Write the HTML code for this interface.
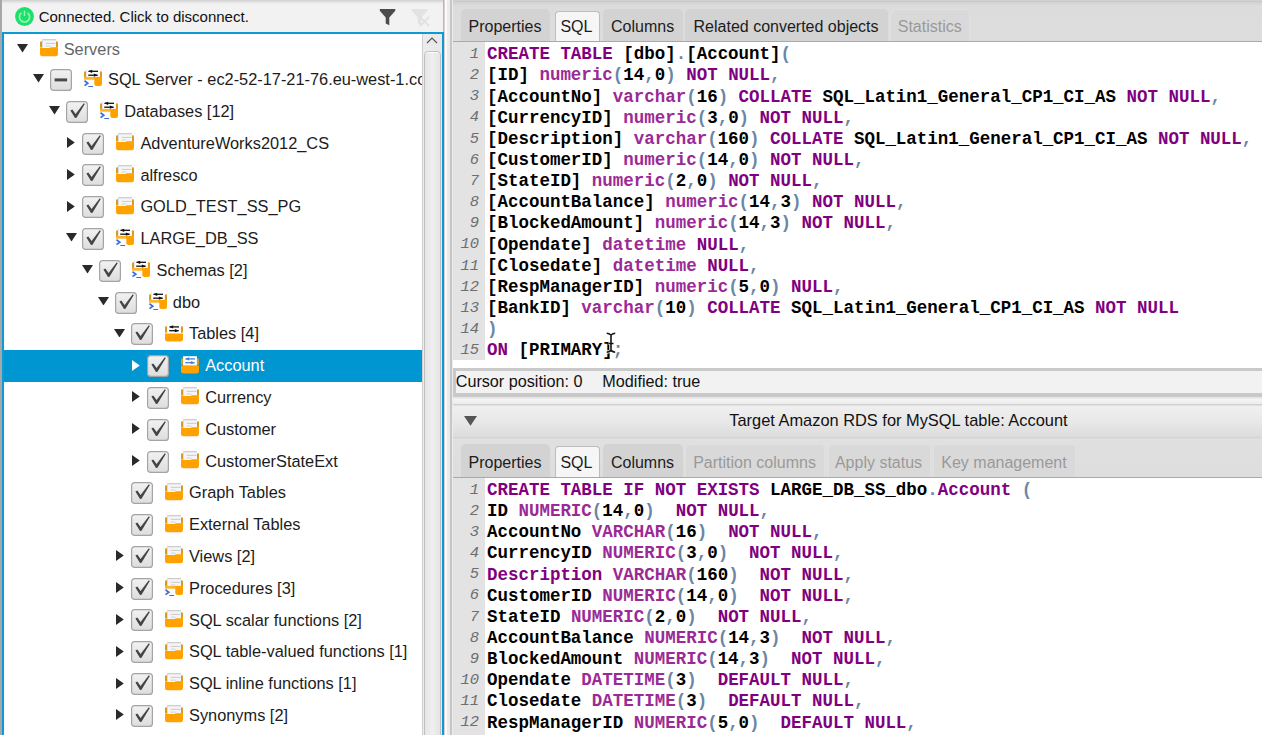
<!DOCTYPE html>
<html><head><meta charset="utf-8"><style>
html,body{margin:0;padding:0;}
body{width:1262px;height:735px;overflow:hidden;position:relative;background:#e6e6e6;font-family:"Liberation Sans",sans-serif;}
.abs{position:absolute;}
.tt{position:absolute;font-size:16.35px;line-height:31.71px;height:31.71px;white-space:nowrap;}
.tab{position:absolute;background:#d3d3d3;border-radius:5px 5px 0 0;}
.tab.sel{background:#f6f6f6;border:1px solid #bdbdbd;border-bottom:none;box-sizing:border-box;border-radius:4px 4px 0 0;}
.tab.dis{background:#d9d9d9;box-shadow:inset 1px 1px 0 #e0e0e0,inset -1px 0 0 #e0e0e0;}
.tl{position:absolute;top:0;font-size:16px;line-height:41px;white-space:nowrap;}
.code{position:absolute;left:487px;font:bold 17.48px/21.15px "Liberation Mono",monospace;white-space:pre;color:#000;}
.gut{position:absolute;left:453px;width:32px;background:#e3e3e3;}
.gn{position:absolute;right:6px;text-align:right;font:italic 15.5px/21.15px "Liberation Mono",monospace;white-space:pre;color:#6e6e6e;}
</style></head><body>
<!-- LEFT PANE -->
<div class="abs" style="left:0;top:0;width:2px;height:735px;background:#a8a8a8"></div>
<div class="abs" style="left:2px;top:0;width:441px;height:32px;background:linear-gradient(#cfcfcf 0,#e4e4e4 2px,#f2f2f2 4px,#f2f2f2 100%)"></div>
<div class="abs" style="left:443px;top:0;width:1px;height:32px;background:#b8b8b8"></div>
<svg class="abs" style="left:15px;top:7px" width="19" height="19" viewBox="0 0 19 19">
<circle cx="9.5" cy="9.5" r="9.4" fill="#1ee068"/>
<path d="M6.4 5.9 A5.1 5.1 0 1 0 12.6 5.9" stroke="#9af2bc" stroke-width="1.6" fill="none"/>
<rect x="8.75" y="3.6" width="1.5" height="5.4" fill="#9af2bc"/>
</svg>
<div class="abs" style="left:38.7px;top:1.3px;font-size:15px;line-height:32px;color:#111;white-space:nowrap">Connected. Click to disconnect.</div>
<svg class="abs" style="left:379px;top:8px" width="18" height="18" viewBox="0 0 18 18">
<path d="M0.8 0.9 H16.3 V2.8 L10.3 9.5 V17.3 L6.7 15.4 V9.5 L0.8 2.8 Z" fill="#4c4c4c"/>
</svg>
<svg class="abs" style="left:411px;top:8px" width="19" height="19" viewBox="0 0 19 19">
<path d="M0.8 0.9 H16.3 V2.8 L10.3 9.5 V17.3 L6.7 15.4 V9.5 L0.8 2.8 Z" fill="#e2e2e2"/>
<path d="M9 9 L18 18 M18 9 L9 18" stroke="#dedede" stroke-width="1.6"/>
</svg>
<!-- tree box -->
<div class="abs" style="left:2px;top:32px;width:442px;height:703px;background:#0a9bd6"></div>
<div class="abs" style="left:4px;top:34px;width:438px;height:701px;background:#fff;overflow:hidden">
<div class="abs" style="left:-4px;top:-34px;width:422px;height:735px;overflow:hidden">
<svg style="position:absolute;left:17.00px;top:44.15px" width="11" height="8.5" viewBox="0 0 11 8.5"><path d="M0 0 H11 L5.5 8.5 Z" fill="#2a2a2a"/></svg>
<svg style="position:absolute;left:40.00px;top:39.15px" width="18" height="18" viewBox="0 0 18 18"><rect x="0" y="2.2" width="2.6" height="6.6" rx="1.2" fill="#dc9a1c"/><rect x="15.4" y="2.2" width="2.6" height="6.6" rx="1.2" fill="#dc9a1c"/><rect x="2" y="0.1" width="14" height="8.6" fill="#f5f5f7"/><rect x="2" y="0.1" width="14" height="1.2" fill="#cbcbcb"/><rect x="2" y="0.1" width="1" height="8.6" fill="#d9dde8"/><rect x="5.8" y="3.9" width="9.6" height="1.1" fill="#cfcfcf"/><rect x="5.8" y="6.6" width="4.5" height="1" fill="#cdd2dc"/><path d="M0 9.1 H9.8 L10.6 8.3 H18 V15 Q18 17.2 15.8 17.2 H2.2 Q0 17.2 0 15 Z" fill="#ffa200"/></svg>
<div class="tt" style="left:63.70px;top:33.85px;color:#666">Servers</div>
<svg style="position:absolute;left:33.20px;top:74.44px" width="11" height="8.5" viewBox="0 0 11 8.5"><path d="M0 0 H11 L5.5 8.5 Z" fill="#2a2a2a"/></svg>
<svg style="position:absolute;left:50.00px;top:69.04px" width="22" height="22" viewBox="0 0 22 22"><defs><linearGradient id="cg" x1="0" y1="0" x2="0" y2="1"><stop offset="0" stop-color="#f2f2f2"/><stop offset="1" stop-color="#dddddd"/></linearGradient></defs><rect x="0.6" y="0.6" width="20.8" height="20.8" rx="3" fill="url(#cg)" stroke="#a4a4a4" stroke-width="1.2"/><rect x="4.6" y="9.4" width="12.5" height="3" fill="#4a4a4a"/></svg>
<svg style="position:absolute;left:83.80px;top:69.44px" width="18" height="18" viewBox="0 0 18 18"><rect x="0" y="2.2" width="2.6" height="6.6" rx="1.2" fill="#dc9a1c"/><rect x="15.4" y="2.2" width="2.6" height="6.6" rx="1.2" fill="#dc9a1c"/><rect x="2.2" y="0" width="13.6" height="8.4" fill="#fff"/><rect x="2.2" y="0" width="0.9" height="8.4" fill="#e2e4ea"/><rect x="4.6" y="1.65" width="9.4" height="1.3" fill="#111"/><path d="M4.0 2.3 L8.2 0.6999999999999997 L8.2 3.9 Z" fill="#111"/><rect x="4.2" y="5.55" width="9.4" height="1.3" fill="#111"/><path d="M14.0 6.2 L9.8 4.6 L9.8 7.800000000000001 Z" fill="#111"/><rect x="0" y="7.9" width="18" height="2.8" fill="#ffb52a"/><path d="M10.3 7.9 H18 V15.1 Q18 17.1 16 17.1 H12.3 Q10.3 17.1 10.3 15.1 Z" fill="#ffa200"/><path d="M0.5 11.8 L3.8 14.2 L0.5 16.6" stroke="#3a6fd8" stroke-width="1.7" fill="none"/><rect x="4.3" y="17" width="4.8" height="1.4" fill="#3a6fd8"/></svg>
<div class="tt" style="left:108.00px;top:64.14px;color:#1c1c1c">SQL Server - ec2-52-17-21-76.eu-west-1.compute.amazonaws.com</div>
<svg style="position:absolute;left:49.40px;top:106.23px" width="11" height="8.5" viewBox="0 0 11 8.5"><path d="M0 0 H11 L5.5 8.5 Z" fill="#2a2a2a"/></svg>
<svg style="position:absolute;left:66.20px;top:100.83px" width="22" height="22" viewBox="0 0 22 22"><defs><linearGradient id="cg" x1="0" y1="0" x2="0" y2="1"><stop offset="0" stop-color="#f2f2f2"/><stop offset="1" stop-color="#dddddd"/></linearGradient></defs><rect x="0.6" y="0.6" width="20.8" height="20.8" rx="3" fill="url(#cg)" stroke="#a4a4a4" stroke-width="1.2"/><path d="M4.4 9.5 L6.3 8.4 L9.6 13.1 L17.8 2.3 L18.8 3.1 L10.5 16.7 L9.0 16.9 Z" fill="#454545"/></svg>
<svg style="position:absolute;left:100.00px;top:101.23px" width="18" height="18" viewBox="0 0 18 18"><rect x="0" y="2.2" width="2.6" height="6.6" rx="1.2" fill="#dc9a1c"/><rect x="15.4" y="2.2" width="2.6" height="6.6" rx="1.2" fill="#dc9a1c"/><rect x="2.2" y="0" width="13.6" height="8.4" fill="#fff"/><rect x="2.2" y="0" width="0.9" height="8.4" fill="#e2e4ea"/><rect x="4.6" y="1.65" width="9.4" height="1.3" fill="#111"/><path d="M4.0 2.3 L8.2 0.6999999999999997 L8.2 3.9 Z" fill="#111"/><rect x="4.2" y="5.55" width="9.4" height="1.3" fill="#111"/><path d="M14.0 6.2 L9.8 4.6 L9.8 7.800000000000001 Z" fill="#111"/><rect x="0" y="7.9" width="18" height="2.8" fill="#ffb52a"/><path d="M10.3 7.9 H18 V15.1 Q18 17.1 16 17.1 H12.3 Q10.3 17.1 10.3 15.1 Z" fill="#ffa200"/><path d="M0.5 11.8 L3.8 14.2 L0.5 16.6" stroke="#3a6fd8" stroke-width="1.7" fill="none"/><rect x="4.3" y="17" width="4.8" height="1.4" fill="#3a6fd8"/></svg>
<div class="tt" style="left:124.20px;top:95.93px;color:#1c1c1c">Databases [12]</div>
<svg style="position:absolute;left:67.00px;top:137.12px" width="8" height="11" viewBox="0 0 8 11"><path d="M0 0 L7.8 5.5 L0 11 Z" fill="#2a2a2a"/></svg>
<svg style="position:absolute;left:82.40px;top:132.62px" width="22" height="22" viewBox="0 0 22 22"><defs><linearGradient id="cg" x1="0" y1="0" x2="0" y2="1"><stop offset="0" stop-color="#f2f2f2"/><stop offset="1" stop-color="#dddddd"/></linearGradient></defs><rect x="0.6" y="0.6" width="20.8" height="20.8" rx="3" fill="url(#cg)" stroke="#a4a4a4" stroke-width="1.2"/><path d="M4.4 9.5 L6.3 8.4 L9.6 13.1 L17.8 2.3 L18.8 3.1 L10.5 16.7 L9.0 16.9 Z" fill="#454545"/></svg>
<svg style="position:absolute;left:116.20px;top:133.02px" width="18" height="18" viewBox="0 0 18 18"><rect x="0" y="2.2" width="2.6" height="6.6" rx="1.2" fill="#dc9a1c"/><rect x="15.4" y="2.2" width="2.6" height="6.6" rx="1.2" fill="#dc9a1c"/><rect x="2" y="0.1" width="14" height="8.6" fill="#f5f5f7"/><rect x="2" y="0.1" width="14" height="1.2" fill="#cbcbcb"/><rect x="2" y="0.1" width="1" height="8.6" fill="#d9dde8"/><rect x="5.8" y="3.9" width="9.6" height="1.1" fill="#cfcfcf"/><rect x="5.8" y="6.6" width="4.5" height="1" fill="#cdd2dc"/><path d="M0 9.1 H9.8 L10.6 8.3 H18 V15 Q18 17.2 15.8 17.2 H2.2 Q0 17.2 0 15 Z" fill="#ffa200"/></svg>
<div class="tt" style="left:140.40px;top:127.72px;color:#1c1c1c">AdventureWorks2012_CS</div>
<svg style="position:absolute;left:67.00px;top:168.91px" width="8" height="11" viewBox="0 0 8 11"><path d="M0 0 L7.8 5.5 L0 11 Z" fill="#2a2a2a"/></svg>
<svg style="position:absolute;left:82.40px;top:164.41px" width="22" height="22" viewBox="0 0 22 22"><defs><linearGradient id="cg" x1="0" y1="0" x2="0" y2="1"><stop offset="0" stop-color="#f2f2f2"/><stop offset="1" stop-color="#dddddd"/></linearGradient></defs><rect x="0.6" y="0.6" width="20.8" height="20.8" rx="3" fill="url(#cg)" stroke="#a4a4a4" stroke-width="1.2"/><path d="M4.4 9.5 L6.3 8.4 L9.6 13.1 L17.8 2.3 L18.8 3.1 L10.5 16.7 L9.0 16.9 Z" fill="#454545"/></svg>
<svg style="position:absolute;left:116.20px;top:164.81px" width="18" height="18" viewBox="0 0 18 18"><rect x="0" y="2.2" width="2.6" height="6.6" rx="1.2" fill="#dc9a1c"/><rect x="15.4" y="2.2" width="2.6" height="6.6" rx="1.2" fill="#dc9a1c"/><rect x="2" y="0.1" width="14" height="8.6" fill="#f5f5f7"/><rect x="2" y="0.1" width="14" height="1.2" fill="#cbcbcb"/><rect x="2" y="0.1" width="1" height="8.6" fill="#d9dde8"/><rect x="5.8" y="3.9" width="9.6" height="1.1" fill="#cfcfcf"/><rect x="5.8" y="6.6" width="4.5" height="1" fill="#cdd2dc"/><path d="M0 9.1 H9.8 L10.6 8.3 H18 V15 Q18 17.2 15.8 17.2 H2.2 Q0 17.2 0 15 Z" fill="#ffa200"/></svg>
<div class="tt" style="left:140.40px;top:159.51px;color:#1c1c1c">alfresco</div>
<svg style="position:absolute;left:67.00px;top:200.70px" width="8" height="11" viewBox="0 0 8 11"><path d="M0 0 L7.8 5.5 L0 11 Z" fill="#2a2a2a"/></svg>
<svg style="position:absolute;left:82.40px;top:196.20px" width="22" height="22" viewBox="0 0 22 22"><defs><linearGradient id="cg" x1="0" y1="0" x2="0" y2="1"><stop offset="0" stop-color="#f2f2f2"/><stop offset="1" stop-color="#dddddd"/></linearGradient></defs><rect x="0.6" y="0.6" width="20.8" height="20.8" rx="3" fill="url(#cg)" stroke="#a4a4a4" stroke-width="1.2"/><path d="M4.4 9.5 L6.3 8.4 L9.6 13.1 L17.8 2.3 L18.8 3.1 L10.5 16.7 L9.0 16.9 Z" fill="#454545"/></svg>
<svg style="position:absolute;left:116.20px;top:196.60px" width="18" height="18" viewBox="0 0 18 18"><rect x="0" y="2.2" width="2.6" height="6.6" rx="1.2" fill="#dc9a1c"/><rect x="15.4" y="2.2" width="2.6" height="6.6" rx="1.2" fill="#dc9a1c"/><rect x="2" y="0.1" width="14" height="8.6" fill="#f5f5f7"/><rect x="2" y="0.1" width="14" height="1.2" fill="#cbcbcb"/><rect x="2" y="0.1" width="1" height="8.6" fill="#d9dde8"/><rect x="5.8" y="3.9" width="9.6" height="1.1" fill="#cfcfcf"/><rect x="5.8" y="6.6" width="4.5" height="1" fill="#cdd2dc"/><path d="M0 9.1 H9.8 L10.6 8.3 H18 V15 Q18 17.2 15.8 17.2 H2.2 Q0 17.2 0 15 Z" fill="#ffa200"/></svg>
<div class="tt" style="left:140.40px;top:191.30px;color:#1c1c1c">GOLD_TEST_SS_PG</div>
<svg style="position:absolute;left:65.60px;top:233.39px" width="11" height="8.5" viewBox="0 0 11 8.5"><path d="M0 0 H11 L5.5 8.5 Z" fill="#2a2a2a"/></svg>
<svg style="position:absolute;left:82.40px;top:227.99px" width="22" height="22" viewBox="0 0 22 22"><defs><linearGradient id="cg" x1="0" y1="0" x2="0" y2="1"><stop offset="0" stop-color="#f2f2f2"/><stop offset="1" stop-color="#dddddd"/></linearGradient></defs><rect x="0.6" y="0.6" width="20.8" height="20.8" rx="3" fill="url(#cg)" stroke="#a4a4a4" stroke-width="1.2"/><path d="M4.4 9.5 L6.3 8.4 L9.6 13.1 L17.8 2.3 L18.8 3.1 L10.5 16.7 L9.0 16.9 Z" fill="#454545"/></svg>
<svg style="position:absolute;left:116.20px;top:228.39px" width="18" height="18" viewBox="0 0 18 18"><rect x="0" y="2.2" width="2.6" height="6.6" rx="1.2" fill="#dc9a1c"/><rect x="15.4" y="2.2" width="2.6" height="6.6" rx="1.2" fill="#dc9a1c"/><rect x="2.2" y="0" width="13.6" height="8.4" fill="#fff"/><rect x="2.2" y="0" width="0.9" height="8.4" fill="#e2e4ea"/><rect x="4.6" y="1.65" width="9.4" height="1.3" fill="#111"/><path d="M4.0 2.3 L8.2 0.6999999999999997 L8.2 3.9 Z" fill="#111"/><rect x="4.2" y="5.55" width="9.4" height="1.3" fill="#111"/><path d="M14.0 6.2 L9.8 4.6 L9.8 7.800000000000001 Z" fill="#111"/><rect x="0" y="7.9" width="18" height="2.8" fill="#ffb52a"/><path d="M10.3 7.9 H18 V15.1 Q18 17.1 16 17.1 H12.3 Q10.3 17.1 10.3 15.1 Z" fill="#ffa200"/><path d="M0.5 11.8 L3.8 14.2 L0.5 16.6" stroke="#3a6fd8" stroke-width="1.7" fill="none"/><rect x="4.3" y="17" width="4.8" height="1.4" fill="#3a6fd8"/></svg>
<div class="tt" style="left:140.40px;top:223.09px;color:#1c1c1c">LARGE_DB_SS</div>
<svg style="position:absolute;left:81.80px;top:265.18px" width="11" height="8.5" viewBox="0 0 11 8.5"><path d="M0 0 H11 L5.5 8.5 Z" fill="#2a2a2a"/></svg>
<svg style="position:absolute;left:98.60px;top:259.78px" width="22" height="22" viewBox="0 0 22 22"><defs><linearGradient id="cg" x1="0" y1="0" x2="0" y2="1"><stop offset="0" stop-color="#f2f2f2"/><stop offset="1" stop-color="#dddddd"/></linearGradient></defs><rect x="0.6" y="0.6" width="20.8" height="20.8" rx="3" fill="url(#cg)" stroke="#a4a4a4" stroke-width="1.2"/><path d="M4.4 9.5 L6.3 8.4 L9.6 13.1 L17.8 2.3 L18.8 3.1 L10.5 16.7 L9.0 16.9 Z" fill="#454545"/></svg>
<svg style="position:absolute;left:132.40px;top:260.18px" width="18" height="18" viewBox="0 0 18 18"><rect x="0" y="2.2" width="2.6" height="6.6" rx="1.2" fill="#dc9a1c"/><rect x="15.4" y="2.2" width="2.6" height="6.6" rx="1.2" fill="#dc9a1c"/><rect x="2.2" y="0" width="13.6" height="8.4" fill="#fff"/><rect x="2.2" y="0" width="0.9" height="8.4" fill="#e2e4ea"/><rect x="4.6" y="1.65" width="9.4" height="1.3" fill="#111"/><path d="M4.0 2.3 L8.2 0.6999999999999997 L8.2 3.9 Z" fill="#111"/><rect x="4.2" y="5.55" width="9.4" height="1.3" fill="#111"/><path d="M14.0 6.2 L9.8 4.6 L9.8 7.800000000000001 Z" fill="#111"/><rect x="0" y="7.9" width="18" height="2.8" fill="#ffb52a"/><path d="M10.3 7.9 H18 V15.1 Q18 17.1 16 17.1 H12.3 Q10.3 17.1 10.3 15.1 Z" fill="#ffa200"/><path d="M0.5 11.8 L3.8 14.2 L0.5 16.6" stroke="#3a6fd8" stroke-width="1.7" fill="none"/><rect x="4.3" y="17" width="4.8" height="1.4" fill="#3a6fd8"/></svg>
<div class="tt" style="left:156.60px;top:254.88px;color:#1c1c1c">Schemas [2]</div>
<svg style="position:absolute;left:98.00px;top:296.97px" width="11" height="8.5" viewBox="0 0 11 8.5"><path d="M0 0 H11 L5.5 8.5 Z" fill="#2a2a2a"/></svg>
<svg style="position:absolute;left:114.80px;top:291.57px" width="22" height="22" viewBox="0 0 22 22"><defs><linearGradient id="cg" x1="0" y1="0" x2="0" y2="1"><stop offset="0" stop-color="#f2f2f2"/><stop offset="1" stop-color="#dddddd"/></linearGradient></defs><rect x="0.6" y="0.6" width="20.8" height="20.8" rx="3" fill="url(#cg)" stroke="#a4a4a4" stroke-width="1.2"/><path d="M4.4 9.5 L6.3 8.4 L9.6 13.1 L17.8 2.3 L18.8 3.1 L10.5 16.7 L9.0 16.9 Z" fill="#454545"/></svg>
<svg style="position:absolute;left:148.60px;top:291.97px" width="18" height="18" viewBox="0 0 18 18"><rect x="0" y="2.2" width="2.6" height="6.6" rx="1.2" fill="#dc9a1c"/><rect x="15.4" y="2.2" width="2.6" height="6.6" rx="1.2" fill="#dc9a1c"/><rect x="2.2" y="0" width="13.6" height="8.4" fill="#fff"/><rect x="2.2" y="0" width="0.9" height="8.4" fill="#e2e4ea"/><rect x="4.6" y="1.65" width="9.4" height="1.3" fill="#111"/><path d="M4.0 2.3 L8.2 0.6999999999999997 L8.2 3.9 Z" fill="#111"/><rect x="4.2" y="5.55" width="9.4" height="1.3" fill="#111"/><path d="M14.0 6.2 L9.8 4.6 L9.8 7.800000000000001 Z" fill="#111"/><rect x="0" y="7.9" width="18" height="2.8" fill="#ffb52a"/><path d="M10.3 7.9 H18 V15.1 Q18 17.1 16 17.1 H12.3 Q10.3 17.1 10.3 15.1 Z" fill="#ffa200"/><path d="M0.5 11.8 L3.8 14.2 L0.5 16.6" stroke="#3a6fd8" stroke-width="1.7" fill="none"/><rect x="4.3" y="17" width="4.8" height="1.4" fill="#3a6fd8"/></svg>
<div class="tt" style="left:172.80px;top:286.67px;color:#1c1c1c">dbo</div>
<svg style="position:absolute;left:114.20px;top:328.76px" width="11" height="8.5" viewBox="0 0 11 8.5"><path d="M0 0 H11 L5.5 8.5 Z" fill="#2a2a2a"/></svg>
<svg style="position:absolute;left:131.00px;top:323.36px" width="22" height="22" viewBox="0 0 22 22"><defs><linearGradient id="cg" x1="0" y1="0" x2="0" y2="1"><stop offset="0" stop-color="#f2f2f2"/><stop offset="1" stop-color="#dddddd"/></linearGradient></defs><rect x="0.6" y="0.6" width="20.8" height="20.8" rx="3" fill="url(#cg)" stroke="#a4a4a4" stroke-width="1.2"/><path d="M4.4 9.5 L6.3 8.4 L9.6 13.1 L17.8 2.3 L18.8 3.1 L10.5 16.7 L9.0 16.9 Z" fill="#454545"/></svg>
<svg style="position:absolute;left:164.80px;top:323.76px" width="18" height="18" viewBox="0 0 18 18"><rect x="0" y="2.2" width="2.6" height="6.6" rx="1.2" fill="#dc9a1c"/><rect x="15.4" y="2.2" width="2.6" height="6.6" rx="1.2" fill="#dc9a1c"/><rect x="2.1" y="0.2" width="13.8" height="9.6" fill="#fff"/><rect x="4.6" y="2.25" width="9.4" height="1.3" fill="#111"/><path d="M4.0 2.9 L8.2 1.2999999999999998 L8.2 4.5 Z" fill="#111"/><rect x="4.2" y="6.05" width="9.4" height="1.3" fill="#111"/><path d="M14.0 6.7 L9.8 5.1 L9.8 8.3 Z" fill="#111"/><path d="M0 9.5 H18 V15.3 Q18 17.4 15.9 17.4 H2.1 Q0 17.4 0 15.3 Z" fill="#ffa200"/></svg>
<div class="tt" style="left:189.00px;top:318.46px;color:#1c1c1c">Tables [4]</div>
<div style="position:absolute;left:4px;top:350.05px;width:418px;height:31.7px;background:#0096d1"></div>
<svg style="position:absolute;left:131.80px;top:359.65px" width="8" height="11" viewBox="0 0 8 11"><path d="M0 0 L7.8 5.5 L0 11 Z" fill="#fff"/></svg>
<svg style="position:absolute;left:147.20px;top:355.15px" width="22" height="22" viewBox="0 0 22 22"><defs><linearGradient id="cg" x1="0" y1="0" x2="0" y2="1"><stop offset="0" stop-color="#f2f2f2"/><stop offset="1" stop-color="#dddddd"/></linearGradient></defs><rect x="0.6" y="0.6" width="20.8" height="20.8" rx="3" fill="url(#cg)" stroke="#a4a4a4" stroke-width="1.2"/><path d="M4.4 9.5 L6.3 8.4 L9.6 13.1 L17.8 2.3 L18.8 3.1 L10.5 16.7 L9.0 16.9 Z" fill="#454545"/></svg>
<svg style="position:absolute;left:181.00px;top:355.55px" width="18" height="18" viewBox="0 0 18 18"><rect x="0" y="2.2" width="2.6" height="6.6" rx="1.2" fill="#dc9a1c"/><rect x="15.4" y="2.2" width="2.6" height="6.6" rx="1.2" fill="#dc9a1c"/><rect x="2.1" y="0.2" width="13.8" height="9.6" fill="#fff"/><rect x="4.6" y="2.25" width="9.4" height="1.3" fill="#4a7fd8"/><path d="M4.0 2.9 L8.2 1.2999999999999998 L8.2 4.5 Z" fill="#4a7fd8"/><rect x="4.2" y="6.05" width="9.4" height="1.3" fill="#4a7fd8"/><path d="M14.0 6.7 L9.8 5.1 L9.8 8.3 Z" fill="#4a7fd8"/><path d="M0 9.5 H18 V15.3 Q18 17.4 15.9 17.4 H2.1 Q0 17.4 0 15.3 Z" fill="#ffa200"/></svg>
<div class="tt" style="left:205.20px;top:350.25px;color:#fff">Account</div>
<svg style="position:absolute;left:131.80px;top:391.44px" width="8" height="11" viewBox="0 0 8 11"><path d="M0 0 L7.8 5.5 L0 11 Z" fill="#2a2a2a"/></svg>
<svg style="position:absolute;left:147.20px;top:386.94px" width="22" height="22" viewBox="0 0 22 22"><defs><linearGradient id="cg" x1="0" y1="0" x2="0" y2="1"><stop offset="0" stop-color="#f2f2f2"/><stop offset="1" stop-color="#dddddd"/></linearGradient></defs><rect x="0.6" y="0.6" width="20.8" height="20.8" rx="3" fill="url(#cg)" stroke="#a4a4a4" stroke-width="1.2"/><path d="M4.4 9.5 L6.3 8.4 L9.6 13.1 L17.8 2.3 L18.8 3.1 L10.5 16.7 L9.0 16.9 Z" fill="#454545"/></svg>
<svg style="position:absolute;left:181.00px;top:387.34px" width="18" height="18" viewBox="0 0 18 18"><rect x="0" y="2.2" width="2.6" height="6.6" rx="1.2" fill="#dc9a1c"/><rect x="15.4" y="2.2" width="2.6" height="6.6" rx="1.2" fill="#dc9a1c"/><rect x="2" y="0.1" width="14" height="8.6" fill="#f5f5f7"/><rect x="2" y="0.1" width="14" height="1.2" fill="#cbcbcb"/><rect x="2" y="0.1" width="1" height="8.6" fill="#d9dde8"/><rect x="5.8" y="3.9" width="9.6" height="1.1" fill="#cfcfcf"/><rect x="5.8" y="6.6" width="4.5" height="1" fill="#cdd2dc"/><path d="M0 9.1 H9.8 L10.6 8.3 H18 V15 Q18 17.2 15.8 17.2 H2.2 Q0 17.2 0 15 Z" fill="#ffa200"/></svg>
<div class="tt" style="left:205.20px;top:382.04px;color:#1c1c1c">Currency</div>
<svg style="position:absolute;left:131.80px;top:423.23px" width="8" height="11" viewBox="0 0 8 11"><path d="M0 0 L7.8 5.5 L0 11 Z" fill="#2a2a2a"/></svg>
<svg style="position:absolute;left:147.20px;top:418.73px" width="22" height="22" viewBox="0 0 22 22"><defs><linearGradient id="cg" x1="0" y1="0" x2="0" y2="1"><stop offset="0" stop-color="#f2f2f2"/><stop offset="1" stop-color="#dddddd"/></linearGradient></defs><rect x="0.6" y="0.6" width="20.8" height="20.8" rx="3" fill="url(#cg)" stroke="#a4a4a4" stroke-width="1.2"/><path d="M4.4 9.5 L6.3 8.4 L9.6 13.1 L17.8 2.3 L18.8 3.1 L10.5 16.7 L9.0 16.9 Z" fill="#454545"/></svg>
<svg style="position:absolute;left:181.00px;top:419.13px" width="18" height="18" viewBox="0 0 18 18"><rect x="0" y="2.2" width="2.6" height="6.6" rx="1.2" fill="#dc9a1c"/><rect x="15.4" y="2.2" width="2.6" height="6.6" rx="1.2" fill="#dc9a1c"/><rect x="2" y="0.1" width="14" height="8.6" fill="#f5f5f7"/><rect x="2" y="0.1" width="14" height="1.2" fill="#cbcbcb"/><rect x="2" y="0.1" width="1" height="8.6" fill="#d9dde8"/><rect x="5.8" y="3.9" width="9.6" height="1.1" fill="#cfcfcf"/><rect x="5.8" y="6.6" width="4.5" height="1" fill="#cdd2dc"/><path d="M0 9.1 H9.8 L10.6 8.3 H18 V15 Q18 17.2 15.8 17.2 H2.2 Q0 17.2 0 15 Z" fill="#ffa200"/></svg>
<div class="tt" style="left:205.20px;top:413.83px;color:#1c1c1c">Customer</div>
<svg style="position:absolute;left:131.80px;top:455.02px" width="8" height="11" viewBox="0 0 8 11"><path d="M0 0 L7.8 5.5 L0 11 Z" fill="#2a2a2a"/></svg>
<svg style="position:absolute;left:147.20px;top:450.52px" width="22" height="22" viewBox="0 0 22 22"><defs><linearGradient id="cg" x1="0" y1="0" x2="0" y2="1"><stop offset="0" stop-color="#f2f2f2"/><stop offset="1" stop-color="#dddddd"/></linearGradient></defs><rect x="0.6" y="0.6" width="20.8" height="20.8" rx="3" fill="url(#cg)" stroke="#a4a4a4" stroke-width="1.2"/><path d="M4.4 9.5 L6.3 8.4 L9.6 13.1 L17.8 2.3 L18.8 3.1 L10.5 16.7 L9.0 16.9 Z" fill="#454545"/></svg>
<svg style="position:absolute;left:181.00px;top:450.92px" width="18" height="18" viewBox="0 0 18 18"><rect x="0" y="2.2" width="2.6" height="6.6" rx="1.2" fill="#dc9a1c"/><rect x="15.4" y="2.2" width="2.6" height="6.6" rx="1.2" fill="#dc9a1c"/><rect x="2" y="0.1" width="14" height="8.6" fill="#f5f5f7"/><rect x="2" y="0.1" width="14" height="1.2" fill="#cbcbcb"/><rect x="2" y="0.1" width="1" height="8.6" fill="#d9dde8"/><rect x="5.8" y="3.9" width="9.6" height="1.1" fill="#cfcfcf"/><rect x="5.8" y="6.6" width="4.5" height="1" fill="#cdd2dc"/><path d="M0 9.1 H9.8 L10.6 8.3 H18 V15 Q18 17.2 15.8 17.2 H2.2 Q0 17.2 0 15 Z" fill="#ffa200"/></svg>
<div class="tt" style="left:205.20px;top:445.62px;color:#1c1c1c">CustomerStateExt</div>
<svg style="position:absolute;left:131.00px;top:482.31px" width="22" height="22" viewBox="0 0 22 22"><defs><linearGradient id="cg" x1="0" y1="0" x2="0" y2="1"><stop offset="0" stop-color="#f2f2f2"/><stop offset="1" stop-color="#dddddd"/></linearGradient></defs><rect x="0.6" y="0.6" width="20.8" height="20.8" rx="3" fill="url(#cg)" stroke="#a4a4a4" stroke-width="1.2"/><path d="M4.4 9.5 L6.3 8.4 L9.6 13.1 L17.8 2.3 L18.8 3.1 L10.5 16.7 L9.0 16.9 Z" fill="#454545"/></svg>
<svg style="position:absolute;left:164.80px;top:482.71px" width="18" height="18" viewBox="0 0 18 18"><rect x="0" y="2.2" width="2.6" height="6.6" rx="1.2" fill="#dc9a1c"/><rect x="15.4" y="2.2" width="2.6" height="6.6" rx="1.2" fill="#dc9a1c"/><rect x="2" y="0.1" width="14" height="8.6" fill="#f5f5f7"/><rect x="2" y="0.1" width="14" height="1.2" fill="#cbcbcb"/><rect x="2" y="0.1" width="1" height="8.6" fill="#d9dde8"/><rect x="5.8" y="3.9" width="9.6" height="1.1" fill="#cfcfcf"/><rect x="5.8" y="6.6" width="4.5" height="1" fill="#cdd2dc"/><path d="M0 9.1 H9.8 L10.6 8.3 H18 V15 Q18 17.2 15.8 17.2 H2.2 Q0 17.2 0 15 Z" fill="#ffa200"/></svg>
<div class="tt" style="left:189.00px;top:477.41px;color:#1c1c1c">Graph Tables</div>
<svg style="position:absolute;left:131.00px;top:514.10px" width="22" height="22" viewBox="0 0 22 22"><defs><linearGradient id="cg" x1="0" y1="0" x2="0" y2="1"><stop offset="0" stop-color="#f2f2f2"/><stop offset="1" stop-color="#dddddd"/></linearGradient></defs><rect x="0.6" y="0.6" width="20.8" height="20.8" rx="3" fill="url(#cg)" stroke="#a4a4a4" stroke-width="1.2"/><path d="M4.4 9.5 L6.3 8.4 L9.6 13.1 L17.8 2.3 L18.8 3.1 L10.5 16.7 L9.0 16.9 Z" fill="#454545"/></svg>
<svg style="position:absolute;left:164.80px;top:514.50px" width="18" height="18" viewBox="0 0 18 18"><rect x="0" y="2.2" width="2.6" height="6.6" rx="1.2" fill="#dc9a1c"/><rect x="15.4" y="2.2" width="2.6" height="6.6" rx="1.2" fill="#dc9a1c"/><rect x="2" y="0.1" width="14" height="8.6" fill="#f5f5f7"/><rect x="2" y="0.1" width="14" height="1.2" fill="#cbcbcb"/><rect x="2" y="0.1" width="1" height="8.6" fill="#d9dde8"/><rect x="5.8" y="3.9" width="9.6" height="1.1" fill="#cfcfcf"/><rect x="5.8" y="6.6" width="4.5" height="1" fill="#cdd2dc"/><path d="M0 9.1 H9.8 L10.6 8.3 H18 V15 Q18 17.2 15.8 17.2 H2.2 Q0 17.2 0 15 Z" fill="#ffa200"/></svg>
<div class="tt" style="left:189.00px;top:509.20px;color:#1c1c1c">External Tables</div>
<svg style="position:absolute;left:115.60px;top:550.39px" width="8" height="11" viewBox="0 0 8 11"><path d="M0 0 L7.8 5.5 L0 11 Z" fill="#2a2a2a"/></svg>
<svg style="position:absolute;left:131.00px;top:545.89px" width="22" height="22" viewBox="0 0 22 22"><defs><linearGradient id="cg" x1="0" y1="0" x2="0" y2="1"><stop offset="0" stop-color="#f2f2f2"/><stop offset="1" stop-color="#dddddd"/></linearGradient></defs><rect x="0.6" y="0.6" width="20.8" height="20.8" rx="3" fill="url(#cg)" stroke="#a4a4a4" stroke-width="1.2"/><path d="M4.4 9.5 L6.3 8.4 L9.6 13.1 L17.8 2.3 L18.8 3.1 L10.5 16.7 L9.0 16.9 Z" fill="#454545"/></svg>
<svg style="position:absolute;left:164.80px;top:546.29px" width="18" height="18" viewBox="0 0 18 18"><rect x="0" y="2.2" width="2.6" height="6.6" rx="1.2" fill="#dc9a1c"/><rect x="15.4" y="2.2" width="2.6" height="6.6" rx="1.2" fill="#dc9a1c"/><rect x="2" y="0.1" width="14" height="8.6" fill="#f5f5f7"/><rect x="2" y="0.1" width="14" height="1.2" fill="#cbcbcb"/><rect x="2" y="0.1" width="1" height="8.6" fill="#d9dde8"/><rect x="5.8" y="3.9" width="9.6" height="1.1" fill="#cfcfcf"/><rect x="5.8" y="6.6" width="4.5" height="1" fill="#cdd2dc"/><path d="M0 9.1 H9.8 L10.6 8.3 H18 V15 Q18 17.2 15.8 17.2 H2.2 Q0 17.2 0 15 Z" fill="#ffa200"/></svg>
<div class="tt" style="left:189.00px;top:540.99px;color:#1c1c1c">Views [2]</div>
<svg style="position:absolute;left:115.60px;top:582.18px" width="8" height="11" viewBox="0 0 8 11"><path d="M0 0 L7.8 5.5 L0 11 Z" fill="#2a2a2a"/></svg>
<svg style="position:absolute;left:131.00px;top:577.68px" width="22" height="22" viewBox="0 0 22 22"><defs><linearGradient id="cg" x1="0" y1="0" x2="0" y2="1"><stop offset="0" stop-color="#f2f2f2"/><stop offset="1" stop-color="#dddddd"/></linearGradient></defs><rect x="0.6" y="0.6" width="20.8" height="20.8" rx="3" fill="url(#cg)" stroke="#a4a4a4" stroke-width="1.2"/><path d="M4.4 9.5 L6.3 8.4 L9.6 13.1 L17.8 2.3 L18.8 3.1 L10.5 16.7 L9.0 16.9 Z" fill="#454545"/></svg>
<svg style="position:absolute;left:164.80px;top:578.08px" width="18" height="18" viewBox="0 0 18 18"><rect x="0" y="2.2" width="2.6" height="6.6" rx="1.2" fill="#dc9a1c"/><rect x="15.4" y="2.2" width="2.6" height="6.6" rx="1.2" fill="#dc9a1c"/><rect x="2" y="0.0" width="14" height="8.6" fill="#f5f5f7"/><rect x="2" y="0.0" width="14" height="1.2" fill="#cbcbcb"/><rect x="2" y="0.0" width="1" height="8.6" fill="#d9dde8"/><rect x="5.8" y="3.8" width="9.6" height="1.1" fill="#cfcfcf"/><rect x="5.8" y="6.5" width="4.5" height="1" fill="#cdd2dc"/><rect x="0" y="7.9" width="18" height="2.8" fill="#ffb52a"/><path d="M10.3 7.9 H18 V15.1 Q18 17.1 16 17.1 H12.3 Q10.3 17.1 10.3 15.1 Z" fill="#ffa200"/><path d="M0.5 11.8 L3.8 14.2 L0.5 16.6" stroke="#3a6fd8" stroke-width="1.7" fill="none"/><rect x="4.3" y="17" width="4.8" height="1.4" fill="#3a6fd8"/></svg>
<div class="tt" style="left:189.00px;top:572.78px;color:#1c1c1c">Procedures [3]</div>
<svg style="position:absolute;left:115.60px;top:613.97px" width="8" height="11" viewBox="0 0 8 11"><path d="M0 0 L7.8 5.5 L0 11 Z" fill="#2a2a2a"/></svg>
<svg style="position:absolute;left:131.00px;top:609.47px" width="22" height="22" viewBox="0 0 22 22"><defs><linearGradient id="cg" x1="0" y1="0" x2="0" y2="1"><stop offset="0" stop-color="#f2f2f2"/><stop offset="1" stop-color="#dddddd"/></linearGradient></defs><rect x="0.6" y="0.6" width="20.8" height="20.8" rx="3" fill="url(#cg)" stroke="#a4a4a4" stroke-width="1.2"/><path d="M4.4 9.5 L6.3 8.4 L9.6 13.1 L17.8 2.3 L18.8 3.1 L10.5 16.7 L9.0 16.9 Z" fill="#454545"/></svg>
<svg style="position:absolute;left:164.80px;top:609.87px" width="18" height="18" viewBox="0 0 18 18"><rect x="0" y="2.2" width="2.6" height="6.6" rx="1.2" fill="#dc9a1c"/><rect x="15.4" y="2.2" width="2.6" height="6.6" rx="1.2" fill="#dc9a1c"/><rect x="2" y="0.1" width="14" height="8.6" fill="#f5f5f7"/><rect x="2" y="0.1" width="14" height="1.2" fill="#cbcbcb"/><rect x="2" y="0.1" width="1" height="8.6" fill="#d9dde8"/><rect x="5.8" y="3.9" width="9.6" height="1.1" fill="#cfcfcf"/><rect x="5.8" y="6.6" width="4.5" height="1" fill="#cdd2dc"/><path d="M0 9.1 H9.8 L10.6 8.3 H18 V15 Q18 17.2 15.8 17.2 H2.2 Q0 17.2 0 15 Z" fill="#ffa200"/></svg>
<div class="tt" style="left:189.00px;top:604.57px;color:#1c1c1c">SQL scalar functions [2]</div>
<svg style="position:absolute;left:115.60px;top:645.76px" width="8" height="11" viewBox="0 0 8 11"><path d="M0 0 L7.8 5.5 L0 11 Z" fill="#2a2a2a"/></svg>
<svg style="position:absolute;left:131.00px;top:641.26px" width="22" height="22" viewBox="0 0 22 22"><defs><linearGradient id="cg" x1="0" y1="0" x2="0" y2="1"><stop offset="0" stop-color="#f2f2f2"/><stop offset="1" stop-color="#dddddd"/></linearGradient></defs><rect x="0.6" y="0.6" width="20.8" height="20.8" rx="3" fill="url(#cg)" stroke="#a4a4a4" stroke-width="1.2"/><path d="M4.4 9.5 L6.3 8.4 L9.6 13.1 L17.8 2.3 L18.8 3.1 L10.5 16.7 L9.0 16.9 Z" fill="#454545"/></svg>
<svg style="position:absolute;left:164.80px;top:641.66px" width="18" height="18" viewBox="0 0 18 18"><rect x="0" y="2.2" width="2.6" height="6.6" rx="1.2" fill="#dc9a1c"/><rect x="15.4" y="2.2" width="2.6" height="6.6" rx="1.2" fill="#dc9a1c"/><rect x="2" y="0.1" width="14" height="8.6" fill="#f5f5f7"/><rect x="2" y="0.1" width="14" height="1.2" fill="#cbcbcb"/><rect x="2" y="0.1" width="1" height="8.6" fill="#d9dde8"/><rect x="5.8" y="3.9" width="9.6" height="1.1" fill="#cfcfcf"/><rect x="5.8" y="6.6" width="4.5" height="1" fill="#cdd2dc"/><path d="M0 9.1 H9.8 L10.6 8.3 H18 V15 Q18 17.2 15.8 17.2 H2.2 Q0 17.2 0 15 Z" fill="#ffa200"/></svg>
<div class="tt" style="left:189.00px;top:636.36px;color:#1c1c1c">SQL table-valued functions [1]</div>
<svg style="position:absolute;left:115.60px;top:677.55px" width="8" height="11" viewBox="0 0 8 11"><path d="M0 0 L7.8 5.5 L0 11 Z" fill="#2a2a2a"/></svg>
<svg style="position:absolute;left:131.00px;top:673.05px" width="22" height="22" viewBox="0 0 22 22"><defs><linearGradient id="cg" x1="0" y1="0" x2="0" y2="1"><stop offset="0" stop-color="#f2f2f2"/><stop offset="1" stop-color="#dddddd"/></linearGradient></defs><rect x="0.6" y="0.6" width="20.8" height="20.8" rx="3" fill="url(#cg)" stroke="#a4a4a4" stroke-width="1.2"/><path d="M4.4 9.5 L6.3 8.4 L9.6 13.1 L17.8 2.3 L18.8 3.1 L10.5 16.7 L9.0 16.9 Z" fill="#454545"/></svg>
<svg style="position:absolute;left:164.80px;top:673.45px" width="18" height="18" viewBox="0 0 18 18"><rect x="0" y="2.2" width="2.6" height="6.6" rx="1.2" fill="#dc9a1c"/><rect x="15.4" y="2.2" width="2.6" height="6.6" rx="1.2" fill="#dc9a1c"/><rect x="2" y="0.1" width="14" height="8.6" fill="#f5f5f7"/><rect x="2" y="0.1" width="14" height="1.2" fill="#cbcbcb"/><rect x="2" y="0.1" width="1" height="8.6" fill="#d9dde8"/><rect x="5.8" y="3.9" width="9.6" height="1.1" fill="#cfcfcf"/><rect x="5.8" y="6.6" width="4.5" height="1" fill="#cdd2dc"/><path d="M0 9.1 H9.8 L10.6 8.3 H18 V15 Q18 17.2 15.8 17.2 H2.2 Q0 17.2 0 15 Z" fill="#ffa200"/></svg>
<div class="tt" style="left:189.00px;top:668.15px;color:#1c1c1c">SQL inline functions [1]</div>
<svg style="position:absolute;left:115.60px;top:709.34px" width="8" height="11" viewBox="0 0 8 11"><path d="M0 0 L7.8 5.5 L0 11 Z" fill="#2a2a2a"/></svg>
<svg style="position:absolute;left:131.00px;top:704.84px" width="22" height="22" viewBox="0 0 22 22"><defs><linearGradient id="cg" x1="0" y1="0" x2="0" y2="1"><stop offset="0" stop-color="#f2f2f2"/><stop offset="1" stop-color="#dddddd"/></linearGradient></defs><rect x="0.6" y="0.6" width="20.8" height="20.8" rx="3" fill="url(#cg)" stroke="#a4a4a4" stroke-width="1.2"/><path d="M4.4 9.5 L6.3 8.4 L9.6 13.1 L17.8 2.3 L18.8 3.1 L10.5 16.7 L9.0 16.9 Z" fill="#454545"/></svg>
<svg style="position:absolute;left:164.80px;top:705.24px" width="18" height="18" viewBox="0 0 18 18"><rect x="0" y="2.2" width="2.6" height="6.6" rx="1.2" fill="#dc9a1c"/><rect x="15.4" y="2.2" width="2.6" height="6.6" rx="1.2" fill="#dc9a1c"/><rect x="2" y="0.1" width="14" height="8.6" fill="#f5f5f7"/><rect x="2" y="0.1" width="14" height="1.2" fill="#cbcbcb"/><rect x="2" y="0.1" width="1" height="8.6" fill="#d9dde8"/><rect x="5.8" y="3.9" width="9.6" height="1.1" fill="#cfcfcf"/><rect x="5.8" y="6.6" width="4.5" height="1" fill="#cdd2dc"/><path d="M0 9.1 H9.8 L10.6 8.3 H18 V15 Q18 17.2 15.8 17.2 H2.2 Q0 17.2 0 15 Z" fill="#ffa200"/></svg>
<div class="tt" style="left:189.00px;top:699.94px;color:#1c1c1c">Synonyms [2]</div>
</div>
</div>
<!-- scrollbar -->
<div class="abs" style="left:422px;top:34px;width:20px;height:701px;background:linear-gradient(90deg,#cfcfcf 0,#cfcfcf 1px,#ececec 1px,#e8e8e8 100%)"></div>
<svg class="abs" style="left:426px;top:37px" width="12" height="7" viewBox="0 0 12 7"><path d="M1 6 L6 1 L11 6" stroke="#555" stroke-width="1.2" fill="none"/></svg>
<div class="abs" style="left:424.3px;top:50.5px;width:17.2px;height:700px;border:1.8px solid #c0c0c0;border-radius:4px;background:linear-gradient(90deg,#e6e6e6,#efefef 50%,#e4e4e4);box-sizing:border-box;box-shadow:inset 0 1px 0 #fff"></div>
<!-- splitter -->
<div class="abs" style="left:444px;top:0;width:9px;height:735px;background:linear-gradient(90deg,#d8d0d0 0,#d8d0d0 1.2px,#fafafa 1.2px,#fafafa 3.5px,#ebebeb 3.5px,#ebebeb 6px,#c6c6c6 6px,#c6c6c6 7.7px,#ececec 7.7px)"></div>
<!-- RIGHT PANE top tab bar -->
<div class="abs" style="left:453px;top:0;width:809px;height:41px;background:linear-gradient(#d6d6d6 0,#c8c8c8 1.5px,#d3d3d3 2.5px,#d6d6d6 4px,#dcdcdc 6px,#dddddd 100%)"></div>
<div style="position:absolute;left:0;top:0;width:1262px;height:41px">
<div class="tab" style="left:460.8px;top:8.8px;width:89.69999999999999px;height:32.2px"></div>
<div class="tl" style="left:460.2px;width:89.69999999999999px;text-align:center;top:6.3px;color:#1c1c1c">Properties</div>
<div class="tab sel" style="left:554.5px;top:10.5px;width:45.0px;height:31.500000000000004px"></div>
<div class="tl" style="left:553.9px;width:45.0px;text-align:center;top:6.3px;color:#1c1c1c">SQL</div>
<div class="tab" style="left:603.3px;top:8.8px;width:79.90000000000009px;height:32.2px"></div>
<div class="tl" style="left:602.6999999999999px;width:79.90000000000009px;text-align:center;top:6.3px;color:#1c1c1c">Columns</div>
<div class="tab" style="left:685px;top:8.8px;width:203.29999999999995px;height:32.2px"></div>
<div class="tl" style="left:684.4px;width:203.29999999999995px;text-align:center;top:6.3px;color:#1c1c1c">Related converted objects</div>
<div class="tab dis" style="left:890.2px;top:8.8px;width:80.29999999999995px;height:32.2px"></div>
<div class="tl" style="left:889.6px;width:80.29999999999995px;text-align:center;top:6.3px;color:#999">Statistics</div>
</div>
<div class="abs" style="left:453px;top:40.5px;width:809px;height:1.5px;background:#a9a9a9"></div>
<!-- editor 1 -->
<div class="abs" style="left:453px;top:42px;width:809px;height:326px;background:#fff"></div>
<div class="gut" style="top:42px;height:317.7px"></div>
<div class="gn" style="top:44px;left:453px;width:26px">1
2
3
4
5
6
7
8
9
10
11
12
13
14
15</div>
<div class="code" style="top:44.2px"><span style="color:#800080">CREATE TABLE</span><span style="color:#000"> [dbo]</span><span style="color:#6a86a6">.</span><span style="color:#000">[Account]</span><span style="color:#6a86a6">(</span>
<span style="color:#000">[ID] </span><span style="color:#9b2a96">numeric</span><span style="color:#6a86a6">(</span><span style="color:#000">14</span><span style="color:#6a86a6">,</span><span style="color:#000">0</span><span style="color:#6a86a6">)</span><span style="color:#000"> </span><span style="color:#800080">NOT NULL</span><span style="color:#6a86a6">,</span>
<span style="color:#000">[AccountNo] </span><span style="color:#9b2a96">varchar</span><span style="color:#6a86a6">(</span><span style="color:#000">16</span><span style="color:#6a86a6">)</span><span style="color:#000"> </span><span style="color:#800080">COLLATE</span><span style="color:#000"> SQL_Latin1_General_CP1_CI_AS </span><span style="color:#800080">NOT NULL</span><span style="color:#6a86a6">,</span>
<span style="color:#000">[CurrencyID] </span><span style="color:#9b2a96">numeric</span><span style="color:#6a86a6">(</span><span style="color:#000">3</span><span style="color:#6a86a6">,</span><span style="color:#000">0</span><span style="color:#6a86a6">)</span><span style="color:#000"> </span><span style="color:#800080">NOT NULL</span><span style="color:#6a86a6">,</span>
<span style="color:#000">[Description] </span><span style="color:#9b2a96">varchar</span><span style="color:#6a86a6">(</span><span style="color:#000">160</span><span style="color:#6a86a6">)</span><span style="color:#000"> </span><span style="color:#800080">COLLATE</span><span style="color:#000"> SQL_Latin1_General_CP1_CI_AS </span><span style="color:#800080">NOT NULL</span><span style="color:#6a86a6">,</span>
<span style="color:#000">[CustomerID] </span><span style="color:#9b2a96">numeric</span><span style="color:#6a86a6">(</span><span style="color:#000">14</span><span style="color:#6a86a6">,</span><span style="color:#000">0</span><span style="color:#6a86a6">)</span><span style="color:#000"> </span><span style="color:#800080">NOT NULL</span><span style="color:#6a86a6">,</span>
<span style="color:#000">[StateID] </span><span style="color:#9b2a96">numeric</span><span style="color:#6a86a6">(</span><span style="color:#000">2</span><span style="color:#6a86a6">,</span><span style="color:#000">0</span><span style="color:#6a86a6">)</span><span style="color:#000"> </span><span style="color:#800080">NOT NULL</span><span style="color:#6a86a6">,</span>
<span style="color:#000">[AccountBalance] </span><span style="color:#9b2a96">numeric</span><span style="color:#6a86a6">(</span><span style="color:#000">14</span><span style="color:#6a86a6">,</span><span style="color:#000">3</span><span style="color:#6a86a6">)</span><span style="color:#000"> </span><span style="color:#800080">NOT NULL</span><span style="color:#6a86a6">,</span>
<span style="color:#000">[BlockedAmount] </span><span style="color:#9b2a96">numeric</span><span style="color:#6a86a6">(</span><span style="color:#000">14</span><span style="color:#6a86a6">,</span><span style="color:#000">3</span><span style="color:#6a86a6">)</span><span style="color:#000"> </span><span style="color:#800080">NOT NULL</span><span style="color:#6a86a6">,</span>
<span style="color:#000">[Opendate] </span><span style="color:#9b2a96">datetime</span><span style="color:#000"> </span><span style="color:#800080">NULL</span><span style="color:#6a86a6">,</span>
<span style="color:#000">[Closedate] </span><span style="color:#9b2a96">datetime</span><span style="color:#000"> </span><span style="color:#800080">NULL</span><span style="color:#6a86a6">,</span>
<span style="color:#000">[RespManagerID] </span><span style="color:#9b2a96">numeric</span><span style="color:#6a86a6">(</span><span style="color:#000">5</span><span style="color:#6a86a6">,</span><span style="color:#000">0</span><span style="color:#6a86a6">)</span><span style="color:#000"> </span><span style="color:#800080">NULL</span><span style="color:#6a86a6">,</span>
<span style="color:#000">[BankID] </span><span style="color:#9b2a96">varchar</span><span style="color:#6a86a6">(</span><span style="color:#000">10</span><span style="color:#6a86a6">)</span><span style="color:#000"> </span><span style="color:#800080">COLLATE</span><span style="color:#000"> SQL_Latin1_General_CP1_CI_AS </span><span style="color:#800080">NOT NULL</span>
<span style="color:#6a86a6">)</span>
<span style="color:#800080">ON</span><span style="color:#000"> [PRIMARY]</span><span style="color:#6a86a6">;</span></div>
<svg class="abs" style="left:604px;top:331px" width="14" height="24" viewBox="0 0 14 24">
<path d="M2.7 2.2 Q5 2.4 7 4 Q9 2.4 11.2 2.2 M7 4 V19.5 M2.7 21.2 Q5 21 7 19.5 Q9 21 11.2 21.2 M4.5 12.5 H9.5" stroke="#fff" stroke-width="3.2" fill="none"/>
<path d="M2.7 2.2 Q5 2.4 7 4 Q9 2.4 11.2 2.2 M7 4 V19.5 M2.7 21.2 Q5 21 7 19.5 Q9 21 11.2 21.2 M4.5 12.5 H9.5" stroke="#151515" stroke-width="1.6" fill="none"/>
</svg>
<!-- status -->
<div class="abs" style="left:453px;top:368.3px;width:809px;height:29.2px;background:#c9c9c9"></div>
<div class="abs" style="left:456px;top:371px;width:806px;height:22px;background:#f2f2f2"></div>
<div class="abs" style="left:455.7px;top:371px;font-size:16.2px;line-height:21.3px;color:#111;white-space:nowrap">Cursor position: 0</div>
<div class="abs" style="left:602.3px;top:371px;font-size:16.2px;line-height:21.3px;color:#111;white-space:nowrap">Modified: true</div>
<div class="abs" style="left:453px;top:397.5px;width:809px;height:6.2px;background:linear-gradient(#e4e4e4 0,#f4f4f4 1.5px,#ececec 100%)"></div>
<div class="abs" style="left:453px;top:403.5px;width:809px;height:33.5px;background:linear-gradient(#d2d2d2 0,#d2d2d2 1px,#f0f0f0 2px,#e8e8e8 55%,#dcdcdc 100%)"></div>
<svg class="abs" style="left:464px;top:415.6px" width="13" height="10" viewBox="0 0 13 10"><path d="M0 0 H13 L6.5 9.8 Z" fill="#555"/></svg>
<div class="abs" style="left:729.3px;top:404px;font-size:16.4px;line-height:33px;color:#111;white-space:nowrap">Target Amazon RDS for MySQL table: Account</div>
<!-- tab bar 2 -->
<div class="abs" style="left:453px;top:437px;width:809px;height:40.5px;background:linear-gradient(#cfcfcf 0,#e0e0e0 2px,#dddddd 100%)"></div>
<div style="position:absolute;left:0;top:436px;width:1262px;height:41px">
<div class="tab" style="left:460.8px;top:8.3px;width:89.69999999999999px;height:32.7px"></div>
<div class="tl" style="left:460.2px;width:89.69999999999999px;text-align:center;top:6.3px;color:#1c1c1c">Properties</div>
<div class="tab sel" style="left:554.5px;top:10.0px;width:45.0px;height:32.0px"></div>
<div class="tl" style="left:553.9px;width:45.0px;text-align:center;top:6.3px;color:#1c1c1c">SQL</div>
<div class="tab" style="left:603.3px;top:8.3px;width:79.70000000000005px;height:32.7px"></div>
<div class="tl" style="left:602.6999999999999px;width:79.70000000000005px;text-align:center;top:6.3px;color:#1c1c1c">Columns</div>
<div class="tab dis" style="left:685px;top:8.3px;width:140.29999999999995px;height:32.7px"></div>
<div class="tl" style="left:684.4px;width:140.29999999999995px;text-align:center;top:6.3px;color:#999">Partition columns</div>
<div class="tab dis" style="left:827.5px;top:8.3px;width:103.20000000000005px;height:32.7px"></div>
<div class="tl" style="left:826.9px;width:103.20000000000005px;text-align:center;top:6.3px;color:#999">Apply status</div>
<div class="tab dis" style="left:933.2px;top:8.3px;width:142.79999999999995px;height:32.7px"></div>
<div class="tl" style="left:932.6px;width:142.79999999999995px;text-align:center;top:6.3px;color:#999">Key management</div>
</div>
<div class="abs" style="left:453px;top:476.5px;width:809px;height:1.5px;background:#a9a9a9"></div>
<!-- editor 2 -->
<div class="abs" style="left:453px;top:478px;width:809px;height:257px;background:#fff"></div>
<div class="gut" style="top:478px;height:257px"></div>
<div class="gn" style="top:479.6px;left:453px;width:26px">1
2
3
4
5
6
7
8
9
10
11
12
13</div>
<div class="code" style="top:479.9px"><span style="color:#800080">CREATE TABLE IF NOT EXISTS</span><span style="color:#000"> LARGE_DB_SS_dbo</span><span style="color:#6a86a6">.</span><span style="color:#800080">Account</span><span style="color:#000"> </span><span style="color:#6a86a6">(</span>
<span style="color:#000">ID </span><span style="color:#9b2a96">NUMERIC</span><span style="color:#6a86a6">(</span><span style="color:#000">14</span><span style="color:#6a86a6">,</span><span style="color:#000">0</span><span style="color:#6a86a6">)</span><span style="color:#000">  </span><span style="color:#800080">NOT NULL</span><span style="color:#6a86a6">,</span>
<span style="color:#000">AccountNo </span><span style="color:#9b2a96">VARCHAR</span><span style="color:#6a86a6">(</span><span style="color:#000">16</span><span style="color:#6a86a6">)</span><span style="color:#000">  </span><span style="color:#800080">NOT NULL</span><span style="color:#6a86a6">,</span>
<span style="color:#000">CurrencyID </span><span style="color:#9b2a96">NUMERIC</span><span style="color:#6a86a6">(</span><span style="color:#000">3</span><span style="color:#6a86a6">,</span><span style="color:#000">0</span><span style="color:#6a86a6">)</span><span style="color:#000">  </span><span style="color:#800080">NOT NULL</span><span style="color:#6a86a6">,</span>
<span style="color:#800080">Description</span><span style="color:#000"> </span><span style="color:#9b2a96">VARCHAR</span><span style="color:#6a86a6">(</span><span style="color:#000">160</span><span style="color:#6a86a6">)</span><span style="color:#000">  </span><span style="color:#800080">NOT NULL</span><span style="color:#6a86a6">,</span>
<span style="color:#000">CustomerID </span><span style="color:#9b2a96">NUMERIC</span><span style="color:#6a86a6">(</span><span style="color:#000">14</span><span style="color:#6a86a6">,</span><span style="color:#000">0</span><span style="color:#6a86a6">)</span><span style="color:#000">  </span><span style="color:#800080">NOT NULL</span><span style="color:#6a86a6">,</span>
<span style="color:#000">StateID </span><span style="color:#9b2a96">NUMERIC</span><span style="color:#6a86a6">(</span><span style="color:#000">2</span><span style="color:#6a86a6">,</span><span style="color:#000">0</span><span style="color:#6a86a6">)</span><span style="color:#000">  </span><span style="color:#800080">NOT NULL</span><span style="color:#6a86a6">,</span>
<span style="color:#000">AccountBalance </span><span style="color:#9b2a96">NUMERIC</span><span style="color:#6a86a6">(</span><span style="color:#000">14</span><span style="color:#6a86a6">,</span><span style="color:#000">3</span><span style="color:#6a86a6">)</span><span style="color:#000">  </span><span style="color:#800080">NOT NULL</span><span style="color:#6a86a6">,</span>
<span style="color:#000">BlockedAmount </span><span style="color:#9b2a96">NUMERIC</span><span style="color:#6a86a6">(</span><span style="color:#000">14</span><span style="color:#6a86a6">,</span><span style="color:#000">3</span><span style="color:#6a86a6">)</span><span style="color:#000">  </span><span style="color:#800080">NOT NULL</span><span style="color:#6a86a6">,</span>
<span style="color:#000">Opendate </span><span style="color:#9b2a96">DATETIME</span><span style="color:#6a86a6">(</span><span style="color:#000">3</span><span style="color:#6a86a6">)</span><span style="color:#000">  </span><span style="color:#800080">DEFAULT NULL</span><span style="color:#6a86a6">,</span>
<span style="color:#000">Closedate </span><span style="color:#9b2a96">DATETIME</span><span style="color:#6a86a6">(</span><span style="color:#000">3</span><span style="color:#6a86a6">)</span><span style="color:#000">  </span><span style="color:#800080">DEFAULT NULL</span><span style="color:#6a86a6">,</span>
<span style="color:#000">RespManagerID </span><span style="color:#9b2a96">NUMERIC</span><span style="color:#6a86a6">(</span><span style="color:#000">5</span><span style="color:#6a86a6">,</span><span style="color:#000">0</span><span style="color:#6a86a6">)</span><span style="color:#000">  </span><span style="color:#800080">DEFAULT NULL</span><span style="color:#6a86a6">,</span>
<span style="color:#000">BankID </span><span style="color:#9b2a96">VARCHAR</span><span style="color:#6a86a6">(</span><span style="color:#000">10</span><span style="color:#6a86a6">)</span><span style="color:#000">  </span><span style="color:#800080">NOT NULL</span></div>
</body></html>
